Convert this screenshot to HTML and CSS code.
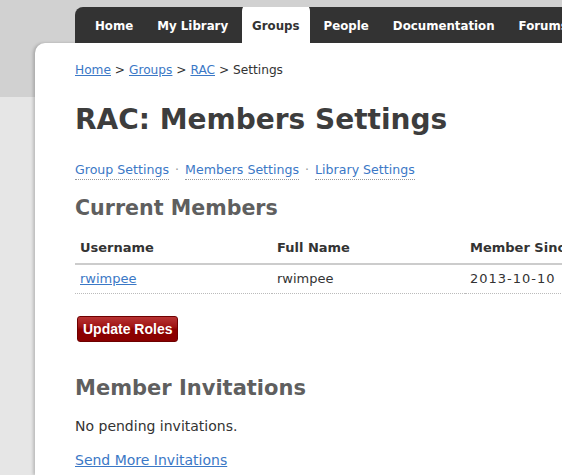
FILE: index.html
```html
<!DOCTYPE html>
<html>
<head>
<meta charset="utf-8">
<link rel="stylesheet" href="styles.css">
</head>
<body>
<div class="header">
  <ul class="nav">
    <li><a href="#">Home</a></li>
    <li><a href="#">My Library</a></li>
    <li class="active"><a href="#">Groups</a></li>
    <li><a href="#">People</a></li>
    <li><a href="#">Documentation</a></li>
    <li><a href="#">Forums</a></li>
  </ul>
</div>
<div class="panel">
  <p class="crumbs"><a href="#">Home</a> &gt; <a href="#">Groups</a> &gt; <a href="#">RAC</a> &gt; Settings</p>
  <h1 class="title">RAC: Members Settings</h1>
  <p class="subnav"><a href="#">Group Settings</a><span class="sep">·</span><a href="#">Members Settings</a><span class="sep">·</span><a href="#">Library Settings</a></p>
  <h2 class="section">Current Members</h2>
  <table class="members">
    <thead>
      <tr><th class="c1">Username</th><th class="c2">Full Name</th><th class="c3">Member Since</th><th class="c4">Role</th></tr>
    </thead>
    <tbody>
      <tr><td><a href="#">rwimpee</a></td><td>rwimpee</td><td class="date">2013-10-10</td><td>Owner</td></tr>
    </tbody>
  </table>
  <button class="btn">Update Roles</button>
  <h2 class="section inv">Member Invitations</h2>
  <p class="none">No pending invitations.</p>
  <p class="send"><a href="#">Send More Invitations</a></p>
</div>
</body>
</html>
```
FILE: styles.css
```css
html, body { overflow: hidden; }
body {
  margin: 0;
  background: linear-gradient(#d1d1d1 0, #d1d1d1 97px, #e6e6e6 97px);
  font-family: "DejaVu Sans", Verdana, sans-serif;
  font-size: 13px;
  color: #333;
  height: 475px;
}
a { color: #3b78c6; }
.header {
  padding-left: 75px;
  height: 43px;
  display: flex;
  align-items: flex-end;
}
.nav {
  list-style: none;
  margin: 0;
  padding: 0 0 0 8px;
  height: 36px;
  background: #333;
  border-top-left-radius: 8px;
  display: flex;
  align-items: flex-end;
  flex: 1;
  white-space: nowrap;
  overflow: hidden;
}
.nav li {
  height: 36px;
  display: flex;
  align-items: center;
  padding: 0 12px;
}
.nav li a {
  color: #fff;
  font-weight: bold;
  text-decoration: none;
  font-size: 11.8px;
  position: relative;
  top: 1px;
}
.nav li.active {
  background: #fff;
  height: 40px;
  margin: 0 2px 0 2px;
  padding: 0 10px;
  border-radius: 8px 8px 0 0;
}
.nav li.active a { color: #333; top: 3px; }
.panel {
  margin-left: 35px;
  background: #fff;
  border-top-left-radius: 10px;
  box-shadow: -2px 0 3px rgba(0,0,0,0.18);
  padding: 19px 0 0 40px;
  height: 413px;
  overflow: hidden;
}
.crumbs { margin: 0; line-height: 17px; font-size: 12.2px; }
.title {
  margin: 23px 0 0;
  font-size: 28px;
  line-height: 36px;
  color: #3d3d3d;
  white-space: nowrap;
}
.subnav { margin: 24px 0 0; line-height: 16px; font-size: 12.6px; }
.subnav a {
  text-decoration: none;
  border-bottom: 1px dotted #999;
  padding-bottom: 2px;
}
.subnav .sep { color: #999; margin: 0 6px; }
.section {
  margin: 18px 0 0;
  font-size: 20.6px;
  line-height: 25px;
  color: #5f5f5f;
  white-space: nowrap;
}
.section.inv { margin-top: 34px; font-size: 21px; }
.members {
  border-collapse: collapse;
  margin-top: 12px;
  width: 640px;
  white-space: nowrap;
}
.members th {
  text-align: left;
  padding: 7px 5px 7px 5px;
  line-height: 16px;
  border-bottom: 2px solid #ccc;
  font-weight: bold;
}
.members .c1 { width: 187px; }
.members .c2 { width: 183px; }
.members .c3 { width: 140px; }
.members td {
  padding: 6px 5px 6px 5px;
  line-height: 16px;
  border-bottom: 1px dotted #bbb;
}
.members td.date { letter-spacing: 1px; }
.btn {
  display: block;
  margin: 22px 0 0 2px;
  height: 26px;
  padding: 0 5px;
  font-family: "Liberation Sans", Arial, sans-serif;
  font-weight: bold;
  font-size: 14px;
  color: #fff;
  border: 1px solid #6e0000;
  border-radius: 3px;
  background: linear-gradient(#b83333 0%, #a01515 40%, #8c0000 52%, #8a0000 100%);
}
.none { margin: 17px 0 0; line-height: 17px; font-size: 14px; }
.send { margin: 17px 0 0; line-height: 17px; font-size: 14px; }
```
